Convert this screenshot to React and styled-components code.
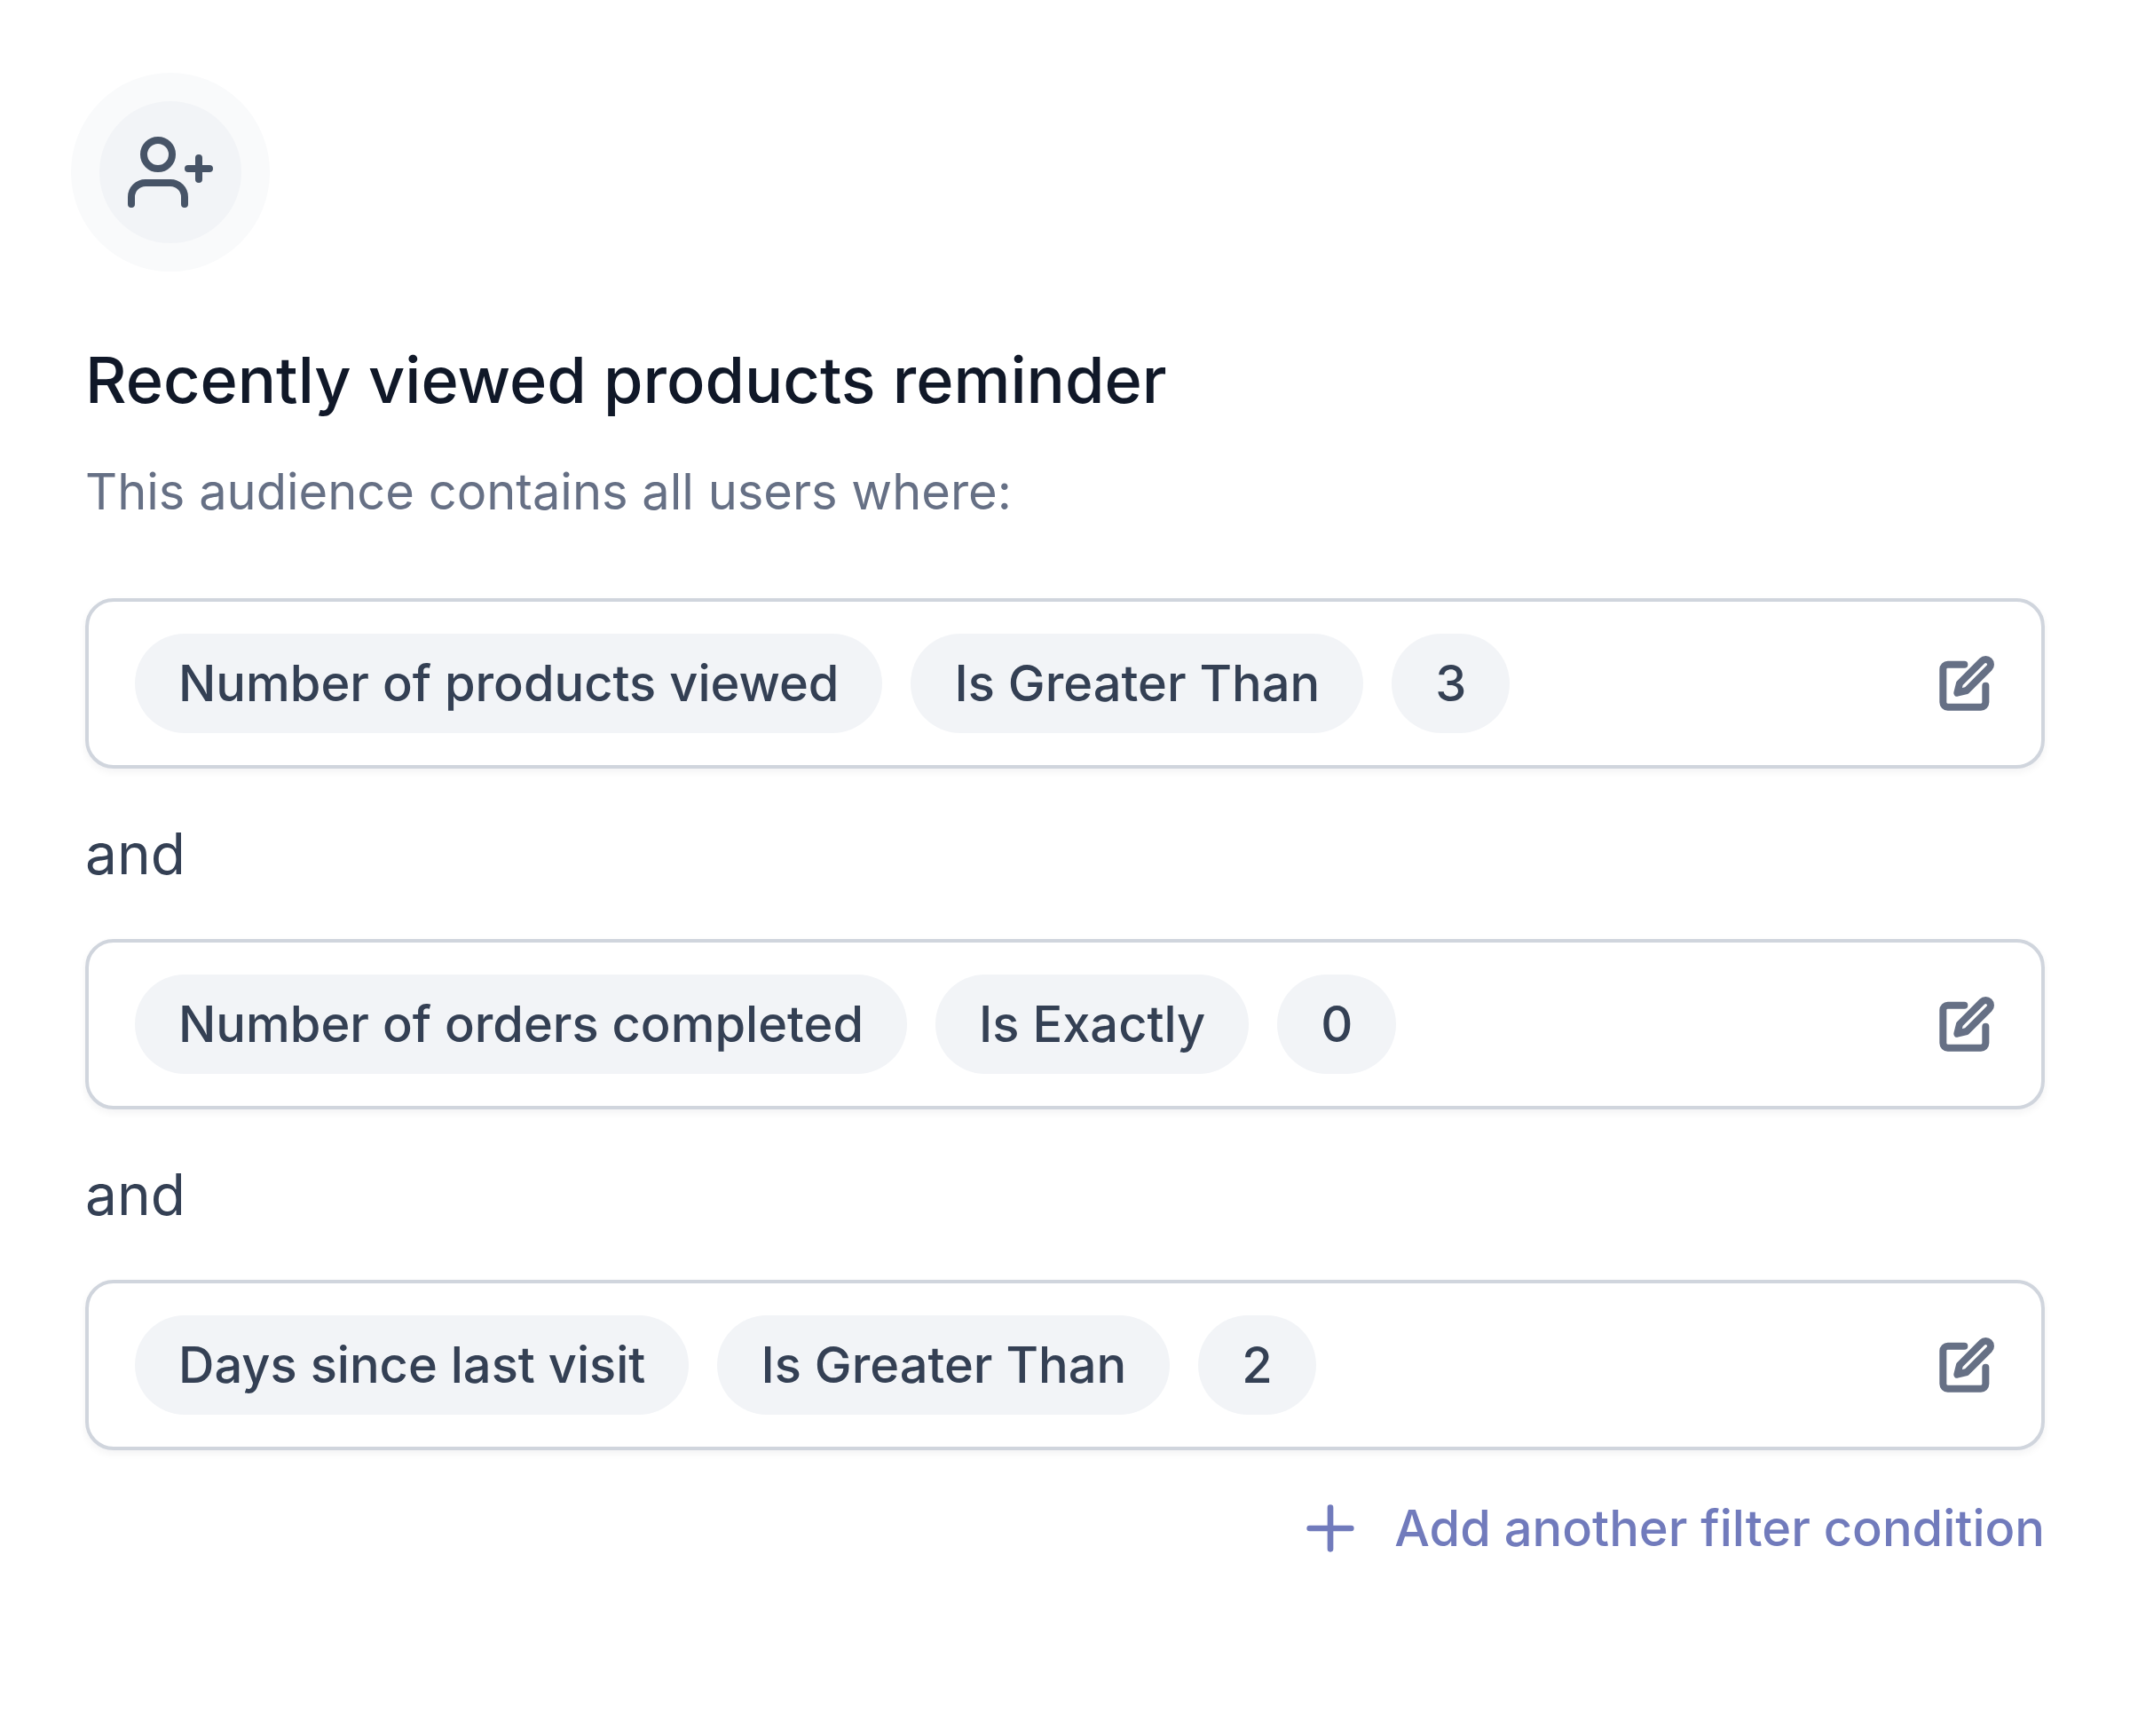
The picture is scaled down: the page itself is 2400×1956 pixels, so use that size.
import styled, { createGlobalStyle } from "styled-components";

const GlobalStyle = createGlobalStyle`
  * {
    box-sizing: border-box;
  }
  body {
    margin: 0;
    background-color: #ffffff;
    font-family: Inter, "Liberation Sans", sans-serif;
  }
`;

const Page = styled.main`
  display: flex;
  flex-direction: column;
  padding: 82px 96px;
`;

const IconCircle = styled.div`
  display: flex;
  align-items: center;
  justify-content: center;
  width: 224px;
  height: 224px;
  margin-left: -16px;
  border: 32px solid #f9fafb;
  border-radius: 50%;
  background-color: #f2f4f7;
  color: #475467;
`;

const Icon = styled.svg`
  display: block;
  flex-shrink: 0;
  width: ${({ $size }) => $size}px;
  height: ${({ $size }) => $size}px;
  fill: none;
  stroke: currentColor;
  stroke-linecap: round;
  stroke-linejoin: round;
`;

const Title = styled.h1`
  margin: 66px 0 0;
  color: #101828;
  font-size: 72px;
  font-weight: 500;
  line-height: 112px;
`;

const Subtitle = styled.p`
  margin: 30px 0 80px;
  color: #667085;
  font-size: 56px;
  line-height: 80px;
`;

const Conditions = styled.div`
  display: flex;
  flex-direction: column;
  gap: 48px;
`;

const Joiner = styled.span`
  color: #344054;
  font-size: 64px;
  line-height: 96px;
`;

const Condition = styled.div`
  display: flex;
  align-items: center;
  justify-content: space-between;
  padding: 36px 52px;
  border: 4px solid #d0d5dd;
  border-radius: 32px;
  background-color: #ffffff;
  box-shadow: 0 4px 8px rgba(16, 24, 40, 0.05);
`;

const Tags = styled.div`
  display: flex;
  flex-wrap: wrap;
  gap: 32px;
`;

const Tag = styled.span`
  padding: 16px 49px;
  border-radius: 56px;
  background-color: #f2f4f7;
  color: #344054;
  font-size: 56px;
  font-weight: 500;
  line-height: 80px;
`;

const Button = styled.button`
  padding: 0;
  border: none;
  background: none;
  font-family: inherit;
  cursor: pointer;
`;

const EditButton = styled(Button)`
  color: #667085;
`;

const AddButton = styled(Button)`
  display: flex;
  align-items: center;
  align-self: flex-end;
  gap: 32px;
  margin-top: 48px;
  color: #717bbc;
  font-size: 56px;
  font-weight: 500;
  line-height: 80px;
`;

const UserPlusIcon = () => (
  <Icon $size={96} viewBox="0 0 24 24" strokeWidth="2" aria-hidden="true">
    <path d="M16 21v-2a4 4 0 0 0-4-4H5a4 4 0 0 0-4 4v2" />
    <circle cx="8.5" cy="7" r="4" />
    <path d="M20 8v6M23 11h-6" />
  </Icon>
);

const EditIcon = () => (
  <Icon $size={64} viewBox="0 0 24 24" strokeWidth="3" aria-hidden="true">
    <path d="M11 4H4a2 2 0 0 0-2 2v14a2 2 0 0 0 2 2h14a2 2 0 0 0 2-2v-7" />
    <path d="M18.5 2.5a2.121 2.121 0 0 1 3 3L12 15l-4 1 1-4 9.5-9.5z" />
  </Icon>
);

const PlusIcon = () => (
  <Icon $size={80} viewBox="0 0 24 24" strokeWidth="2" aria-hidden="true">
    <path d="M12 5v14M5 12h14" />
  </Icon>
);

const conditions = [
  ["Number of products viewed", "Is Greater Than", "3"],
  ["Number of orders completed", "Is Exactly", "0"],
  ["Days since last visit", "Is Greater Than", "2"],
];

const App = () => {
  return (
    <>
      <GlobalStyle />
      <Page>
        <IconCircle>
          <UserPlusIcon />
        </IconCircle>
        <Title>Recently viewed products reminder</Title>
        <Subtitle>This audience contains all users where:</Subtitle>
        <Conditions>
          {conditions.map((parts, index) => [
            index > 0 && <Joiner key={`and-${index}`}>and</Joiner>,
            <Condition key={parts[0]}>
              <Tags>
                {parts.map((part) => (
                  <Tag key={part}>{part}</Tag>
                ))}
              </Tags>
              <EditButton type="button" aria-label="Edit">
                <EditIcon />
              </EditButton>
            </Condition>,
          ])}
        </Conditions>
        <AddButton type="button">
          <PlusIcon />
          Add another filter condition
        </AddButton>
      </Page>
    </>
  );
};

export default App;
